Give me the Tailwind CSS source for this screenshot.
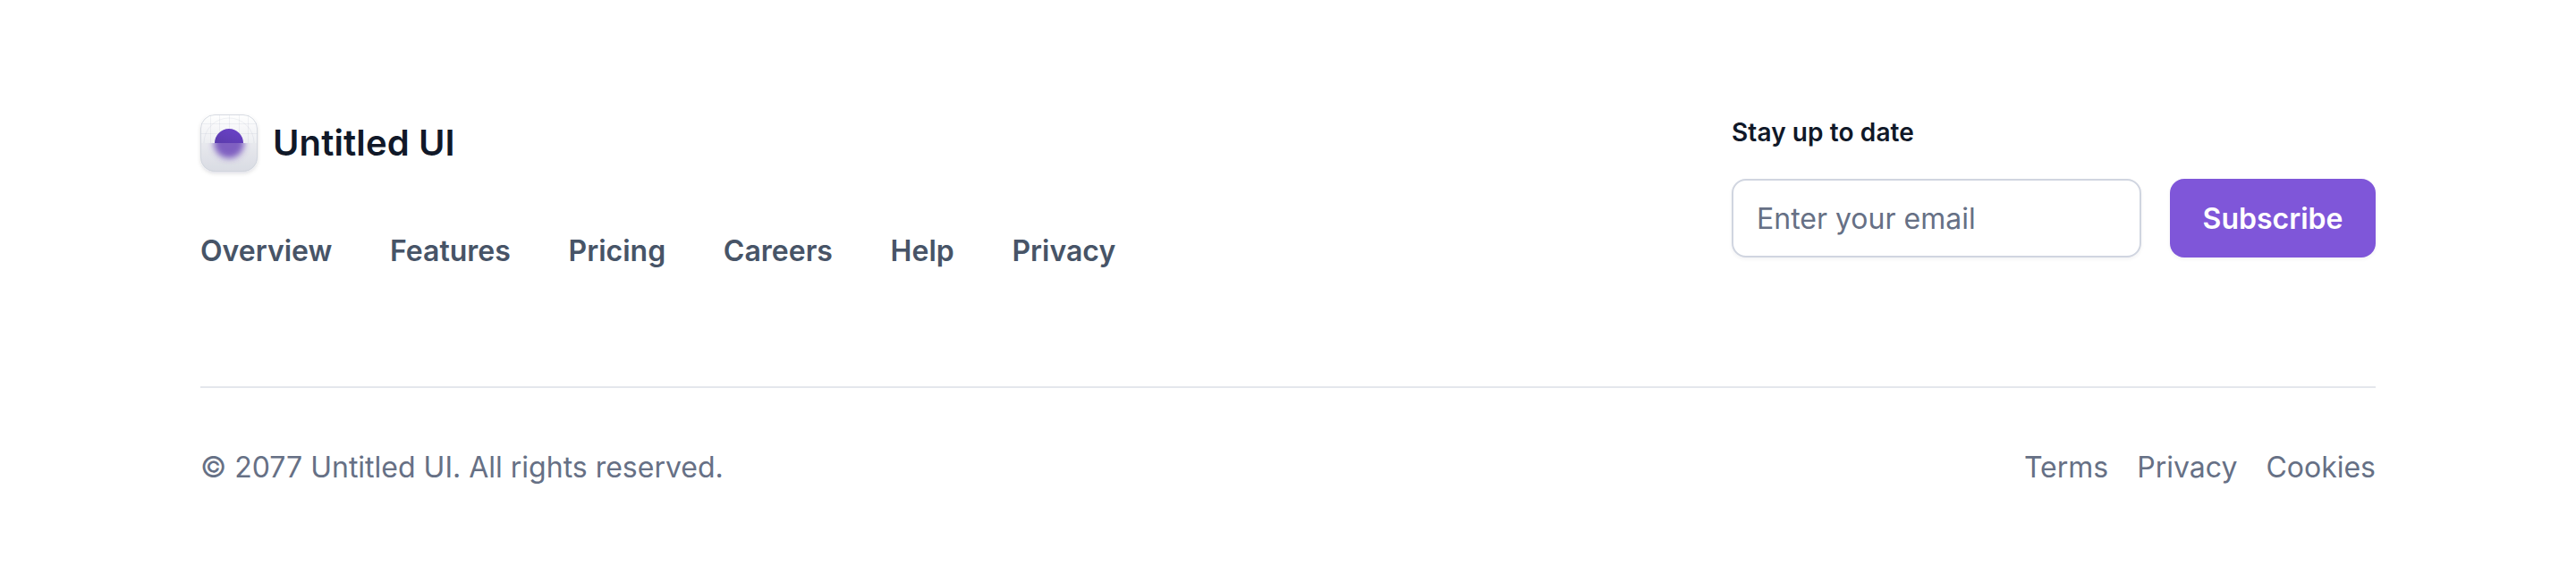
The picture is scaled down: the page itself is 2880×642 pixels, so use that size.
<!DOCTYPE html>
<html lang="en">
<head>
<meta charset="utf-8">
<title>Untitled UI</title>
<script src="https://cdn.jsdelivr.net/npm/@tailwindcss/browser@4"></script>
</head>
<body class="bg-white font-['Inter',sans-serif] antialiased">
<footer class="px-56 pt-32 pb-24 text-[32px] leading-[48px]">
  <div class="flex justify-between">
    <div class="flex flex-col">
      <div class="flex h-16 items-center gap-[17px]">
        <svg class="size-16 shrink-0 overflow-visible" viewBox="0 0 64 64" fill="none">
          <defs>
            <linearGradient id="tile" x1="32" y1="0" x2="32" y2="64" gradientUnits="userSpaceOnUse"><stop stop-color="#fff"/><stop offset="1" stop-color="#dadde4"/></linearGradient>
            <linearGradient id="ball" x1="26" y1="48" x2="38" y2="16" gradientUnits="userSpaceOnUse"><stop stop-color="#53389e"/><stop offset="1" stop-color="#6941c6"/></linearGradient>
            <clipPath id="round"><rect width="64" height="64" rx="16"/></clipPath>
            <clipPath id="top"><rect width="64" height="32"/></clipPath>
            <clipPath id="bottom"><rect y="32" width="64" height="32"/></clipPath>
            <filter id="soft" x="-50%" y="-50%" width="200%" height="200%"><feGaussianBlur stdDeviation="3.8"/></filter>
            <filter id="drop" x="-20%" y="-20%" width="140%" height="150%"><feDropShadow dx="0" dy="2" stdDeviation="2" flood-color="#101828" flood-opacity=".13"/></filter>
          </defs>
          <rect width="64" height="64" rx="16" fill="url(#tile)" filter="url(#drop)"/>
          <g clip-path="url(#round)">
            <g clip-path="url(#top)" stroke="#7f8ba5" stroke-opacity=".1">
              <path d="M11.5 0v32M21.5 0v32M32.5 0v32M43.5 0v32M53.5 0v32M0 10.5h64M0 21.5h64"/>
              <circle cx="32" cy="32" r="28"/>
            </g>
            <path d="M16 32a16 16 0 0 1 32 0z" fill="url(#ball)"/>
            <path d="M0 32h64v32H0z" fill="#d5d9e2" fill-opacity=".2"/>
            <g clip-path="url(#bottom)"><circle cx="32" cy="32" r="17" fill="#6239b5" fill-opacity=".78" filter="url(#soft)"/></g>
          </g>
          <rect x=".5" y=".5" width="63" height="63" rx="15.5" stroke="#d0d5dd" stroke-opacity=".85"/>
        </svg>
        <span class="text-[40px] font-semibold tracking-[0.13px] text-[#101828]">Untitled UI</span>
      </div>
      <nav class="mt-[65px] flex gap-[64.7px] font-semibold text-[#475467]">
        <a>Overview</a><a>Features</a><a>Pricing</a><a>Careers</a><a>Help</a><a>Privacy</a>
      </nav>
    </div>
    <form class="flex w-[720px] flex-col gap-8">
      <label class="text-[28px] leading-10 font-semibold tracking-[0.1px] text-[#101828]">Stay up to date</label>
      <div class="flex gap-8">
        <input type="email" placeholder="Enter your email" class="h-[88px] w-[458px] rounded-2xl border-2 border-[#d0d5e0] bg-white px-[26px] shadow-[0_2px_4px_rgba(16,24,40,0.05)] placeholder:text-[#667085]">
        <button type="button" class="h-[88px] w-[230px] rounded-2xl bg-[#7f56d9] pt-0.5 font-semibold text-white shadow-[0_2px_4px_rgba(16,24,40,0.05)]">Subscribe</button>
      </div>
    </form>
  </div>
  <div class="mt-[127px] flex justify-between border-t-2 border-[#e4e7ec] pt-[65px] text-[#667085]">
    <p>© 2077 Untitled UI. All rights reserved.</p>
    <div class="flex gap-8"><a>Terms</a><a>Privacy</a><a>Cookies</a></div>
  </div>
</footer>
</body>
</html>
